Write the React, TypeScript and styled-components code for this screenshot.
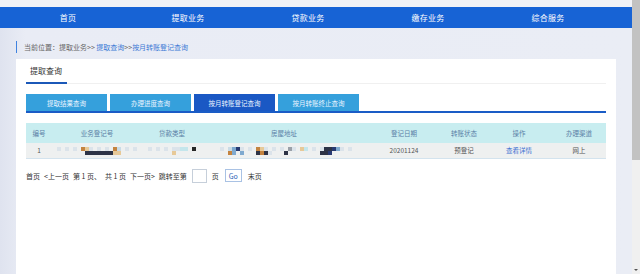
import styled, { createGlobalStyle } from 'styled-components'

const GlobalStyle = createGlobalStyle`
  html, body {
    margin: 0;
    padding: 0;
    overflow: hidden;
    background: #e9ecf4;
  }
  * { box-sizing: border-box; }
`

const FONT = `"Noto Sans CJK SC", "Noto Sans", "Liberation Sans", sans-serif`

const Screen = styled.div`
  width: 640px;
  height: 274px;
  display: flex;
  font-family: ${FONT};
  overflow: hidden;
`

const Main = styled.div`
  width: 632px;
  display: flex;
  flex-direction: column;
  background: linear-gradient(90deg, #dfe3ef 0%, #e9ecf5 4%, #eaedf5 100%);
`

const TopStrip = styled.div`
  height: 7px;
  background: #f1f2f6;
`

const Nav = styled.nav`
  height: 21px;
  background: #1763d5;
  display: grid;
  grid-template-columns: repeat(5, 120px);
  padding-left: 8px;
  align-items: center;
`

const NavItem = styled.div`
  color: #fff;
  font-size: 8px;
  text-align: center;
  letter-spacing: 0.2px;
`

const Breadcrumb = styled.div`
  display: flex;
  align-items: center;
  height: 12px;
  margin: 13px 0 0 16px;
  border-left: 1.5px solid #3f82e0;
  padding-left: 7px;
  font-size: 7px;
  color: #666;
  white-space: pre;
`

const Crumb = styled.span<{ $link?: boolean }>`
  color: ${p => (p.$link ? '#3e7bd6' : '#666')};
`

const Panel = styled.section`
  margin: 6px 0 0 16px;
  width: 600px;
  flex: 1;
  background: #fff;
  padding: 0 10px;
`

const TitleRow = styled.div`
  height: 25px;
  border-bottom: 1px solid #f0f0f0;
  display: flex;
  align-items: flex-end;
`

const Title = styled.div`
  width: 41px;
  height: 25px;
  padding-left: 4px;
  font-size: 8px;
  color: #333;
  display: flex;
  align-items: center;
  border-bottom: 2px solid #1b58b8;
  margin-bottom: -1px;
`

const Tabs = styled.div`
  display: flex;
  gap: 3px;
  margin-top: 10px;
  border-bottom: 2px solid #1a5cc6;
`

const Tab = styled.div<{ $active?: boolean }>`
  width: 81px;
  height: 17px;
  background: ${p => (p.$active ? '#1a58c4' : '#35a0dc')};
  color: #eaf4ff;
  font-size: 6.5px;
  display: flex;
  align-items: center;
  justify-content: center;
`

const Table = styled.table`
  margin-top: 10px;
  width: 580px;
  border-collapse: collapse;
  table-layout: fixed;
  font-size: 6.5px;
`

const Th = styled.th`
  height: 20px;
  background: #c8edf0;
  color: #5b7fa6;
  font-weight: normal;
  text-align: center;
  padding: 0;
`

const Td = styled.td<{ $link?: boolean }>`
  height: 15px;
  background: #eef0f0;
  color: ${p => (p.$link ? '#3b6fd1' : '#555')};
  text-align: center;
  padding: 0;
  border-bottom: 1px solid #d3e3ee;
  white-space: nowrap;
  overflow: visible;
`

const MosaicGrid = styled.div`
  display: inline-grid;
  grid-auto-flow: column;
  grid-template-rows: 4px 4px;
  grid-auto-columns: 4px;
  vertical-align: middle;
`

const Cell = styled.span<{ $c: string }>`
  background: ${p => p.$c};
`

const palette: Record<string, string> = {
  l: '#dbe3ea',
  m: '#c9dbe6',
  o: '#c4833f',
  y: '#e7c998',
  d: '#2d3346',
  b: '#7fa9cf',
  n: '#283a72',
  c: '#c4e6ec',
  k: '#262626',
  g: '#9aa0a8',
  '.': 'transparent',
}

function Mosaic({ top, bottom }: { top: string; bottom: string }) {
  const cells: string[] = []
  for (let i = 0; i < top.length; i++) {
    cells.push(palette[top[i]] ?? 'transparent')
    cells.push(palette[bottom[i]] ?? 'transparent')
  }
  return (
    <MosaicGrid>
      {cells.map((c, i) => (
        <Cell key={i} $c={c} />
      ))}
    </MosaicGrid>
  )
}

const Pager = styled.div`
  display: flex;
  align-items: center;
  gap: 4px;
  margin-top: 10px;
  font-size: 7px;
  color: #333;
`

const PageInput = styled.input`
  width: 15px;
  height: 14px;
  border: 1px solid #c6cfda;
  padding: 0;
  margin: 0 1px;
`

const GoButton = styled.button`
  width: 17px;
  height: 13px;
  border: 1px solid #a9c2e4;
  background: #fff;
  color: #2f64b8;
  font-size: 7px;
  font-family: ${FONT};
  padding: 0;
  margin: 0 2px;
`

const ScrollTrack = styled.div`
  width: 8px;
  background: #f0f0f0;
  display: flex;
  flex-direction: column;
  justify-content: space-between;
`

const ScrollThumb = styled.div`
  height: 160px;
  background: #c2c2c2;
`

const ScrollArrow = styled.div`
  height: 8px;
  display: flex;
  align-items: center;
  justify-content: center;
  &::after {
    content: '';
    border-left: 2px solid transparent;
    border-right: 2px solid transparent;
    border-top: 2px solid #555;
  }
`

const navItems = ['首页', '提取业务', '贷款业务', '缴存业务', '综合服务']
const tabs = ['提取结果查询', '办理进度查询', '按月转账登记查询', '按月转账终止查询']
const headers = ['编号', '业务登记号', '贷款类型', '房屋地址', '登记日期', '转账状态', '操作', '办理渠道']
const widths = [26, 90, 60, 164, 76, 44, 66, 54]

export default function App() {
  return (
    <Screen>
      <GlobalStyle />
      <Main>
        <TopStrip />
        <Nav>
          {navItems.map(n => (
            <NavItem key={n}>{n}</NavItem>
          ))}
        </Nav>
        <Breadcrumb>
          <Crumb>当前位置：提取业务&gt;&gt; </Crumb>
          <Crumb $link>提取查询</Crumb>
          <Crumb>&gt;&gt;</Crumb>
          <Crumb $link>按月转账登记查询</Crumb>
        </Breadcrumb>
        <Panel>
          <TitleRow>
            <Title>提取查询</Title>
          </TitleRow>
          <Tabs>
            {tabs.map((t, i) => (
              <Tab key={t} $active={i === 2}>
                {t}
              </Tab>
            ))}
          </Tabs>
          <Table>
            <colgroup>
              {widths.map((w, i) => (
                <col key={i} style={{ width: w }} />
              ))}
            </colgroup>
            <thead>
              <tr>
                {headers.map(h => (
                  <Th key={h}>{h}</Th>
                ))}
              </tr>
            </thead>
            <tbody>
              <tr>
                <Td>1</Td>
                <Td>
                  <Mosaic top="l.l.l.oyl.l.l.om" bottom=".......dddddddyy" />
                  <Mosaic top=".l.l" bottom="...." />
                </Td>
                <Td>
                  <Mosaic top="l.l.l.llcc.k" bottom="......y....." />
                </Td>
                <Td>
                  <Mosaic
                    top=".l.mbnl.l.oyl.l.l.gl.yc.l.lddnbl.l"
                    bottom="...ob.b...dodl...d........ddn....."
                  />
                </Td>
                <Td>20201124</Td>
                <Td>预登记</Td>
                <Td $link>查看详情</Td>
                <Td>网上</Td>
              </tr>
            </tbody>
          </Table>
          <Pager>
            <span>首页</span>
            <span>&lt;上一页</span>
            <span>第 1 页、</span>
            <span>共 1 页</span>
            <span>下一页&gt;</span>
            <span>跳转至第</span>
            <PageInput />
            <span>页</span>
            <GoButton>Go</GoButton>
            <span>末页</span>
          </Pager>
        </Panel>
      </Main>
      <ScrollTrack>
        <ScrollThumb />
        <ScrollArrow />
      </ScrollTrack>
    </Screen>
  )
}
